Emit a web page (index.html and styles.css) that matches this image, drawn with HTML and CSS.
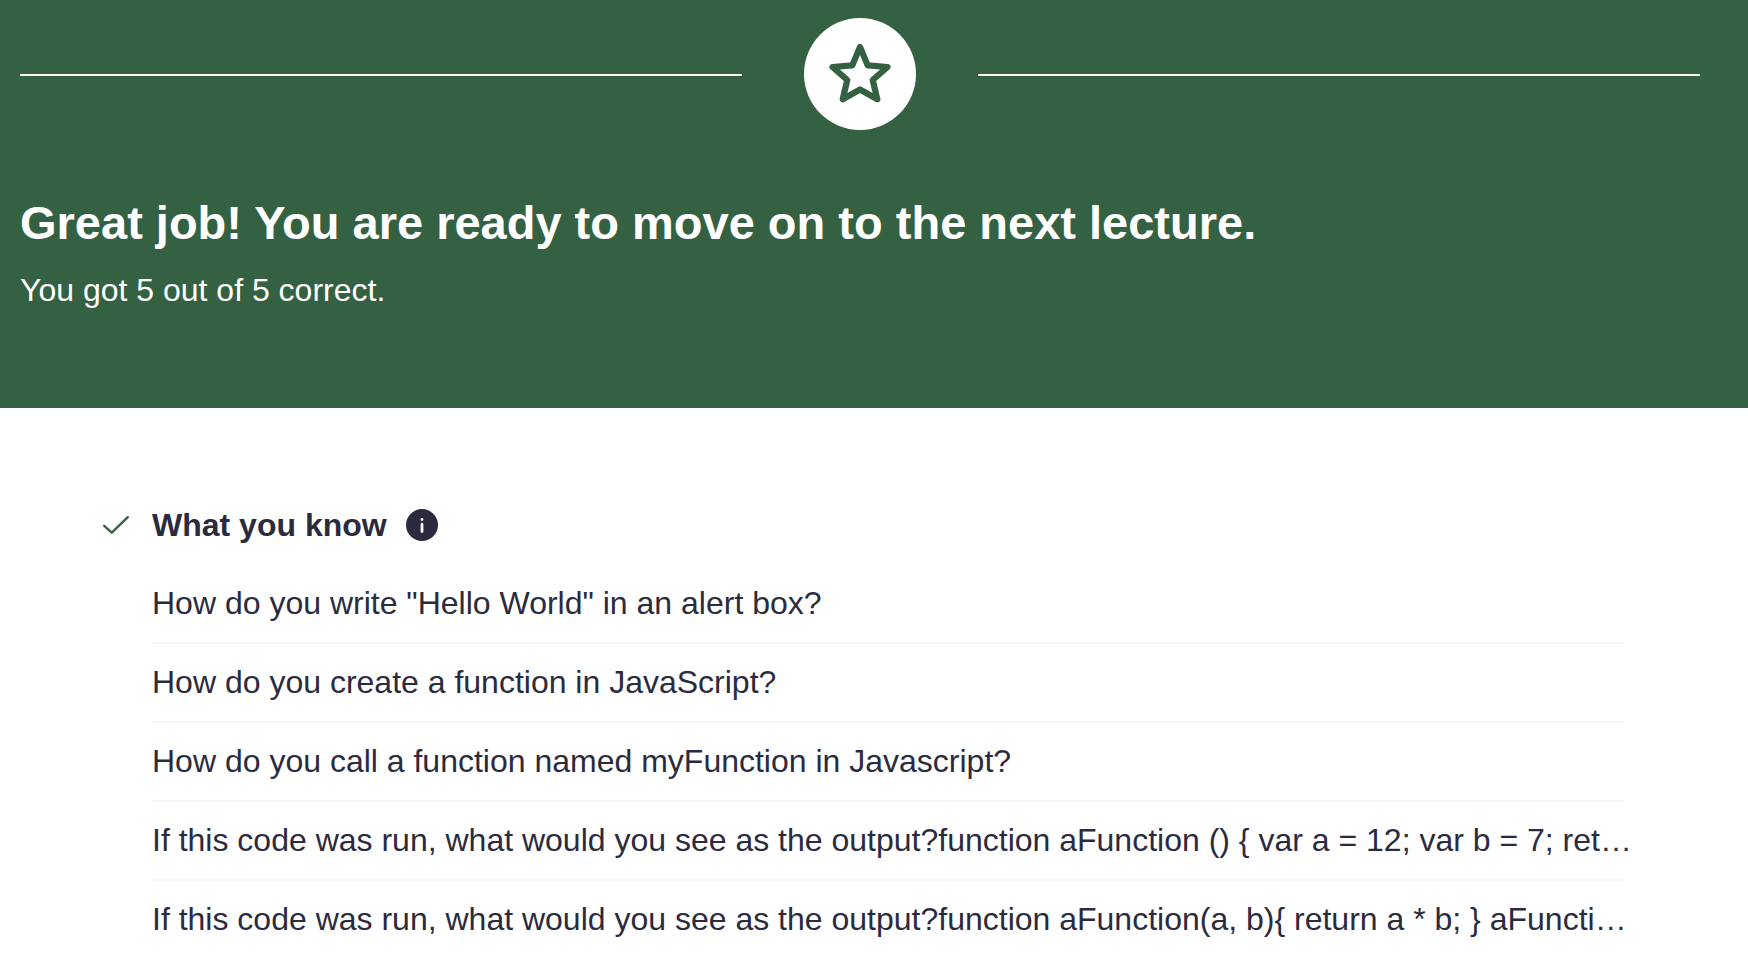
FILE: index.html
```html
<!DOCTYPE html>
<html lang="en">
<head>
<meta charset="utf-8">
<meta name="viewport" content="width=device-width, initial-scale=1">
<title>Quiz results</title>
<link rel="stylesheet" href="styles.css">
</head>
<body>
<header class="result">
  <div class="divider">
    <span class="line"></span>
    <svg class="badge" viewBox="0 0 112 112" aria-hidden="true">
      <circle cx="56" cy="56" r="56" fill="#fff"/>
      <path d="M56 29 63.700 47.400 83.500 49 68.700 62 73.300 81.300 56 71.500 38.700 81.300 43.300 62 28.500 49 48.300 47.400Z" fill="none" stroke="#356143" stroke-width="6.200" stroke-linejoin="round"/>
    </svg>
    <span class="line"></span>
  </div>
  <h1 class="title">Great job! You are ready to move on to the next lecture.</h1>
  <p class="score">You got 5 out of 5 correct.</p>
</header>
<main class="summary">
  <div class="summary-head">
    <svg class="check" viewBox="0 0 28 20" aria-hidden="true">
      <path d="M2.200 10.800 9.800 17.600 25.800 2.200" fill="none" stroke="#356143" stroke-width="2.400" stroke-linecap="round"/>
    </svg>
    <h2 class="subtitle">What you know</h2>
    <button class="info" type="button" aria-label="More information">
      <svg class="info-icon" viewBox="0 0 32 32" aria-hidden="true">
        <circle cx="16" cy="16" r="16" fill="#2b2b40"/>
        <path d="M16 10.500v.1M16 15.200v7.300" fill="none" stroke="#fff" stroke-width="2.800" stroke-linecap="round"/>
      </svg>
    </button>
  </div>
  <ul class="questions">
    <li class="question">How do you write "Hello World" in an alert box?</li>
    <li class="question">How do you create a function in JavaScript?</li>
    <li class="question">How do you call a function named myFunction in Javascript?</li>
    <li class="question">If this code was run, what would you see as the output?function aFunction () { var a = 12; var b = 7; ret…</li>
    <li class="question">If this code was run, what would you see as the output?function aFunction(a, b){ return a * b; } aFuncti…</li>
  </ul>
</main>
</body>
</html>
```
FILE: styles.css
```css
* { box-sizing: border-box; }

body {
  margin: 0;
  background: #fff;
  color: #2b2b40;
  font-family: "Liberation Sans", Arial, sans-serif;
  font-size: 32px;
  line-height: 45px;
}

h1, h2, p, ul { margin: 0; }

.result {
  padding: 18px 48px 95px 20px;
  background: #356143;
  color: #fff;
}

.divider {
  display: flex;
  align-items: center;
  gap: 62px;
  margin-bottom: 63px;
}

.line {
  flex: 1;
  height: 4px;
  border-bottom: 2px solid #fff;
}

.badge {
  width: 112px;
  height: 112px;
}

.title {
  margin-bottom: 15px;
  font-size: 47px;
  line-height: 60px;
}

.summary { padding: 96px 124px 16px 102px; }

.summary-head {
  display: flex;
  align-items: center;
  gap: 19px;
  margin-bottom: 19px;
}

.check {
  width: 28px;
  height: 20px;
  margin-right: 3px;
}

.subtitle {
  font-size: 32px;
  line-height: 42px;
}

.info {
  display: flex;
  padding: 0;
  border: 0;
  background: none;
  cursor: pointer;
}

.info-icon {
  width: 32px;
  height: 32px;
}

.questions {
  padding: 0 0 0 50px;
  list-style: none;
}

.question {
  padding: 16px 0;
  white-space: nowrap;
}

.question:not(:last-child) { border-bottom: 2px solid #f7f7f8; }
```
